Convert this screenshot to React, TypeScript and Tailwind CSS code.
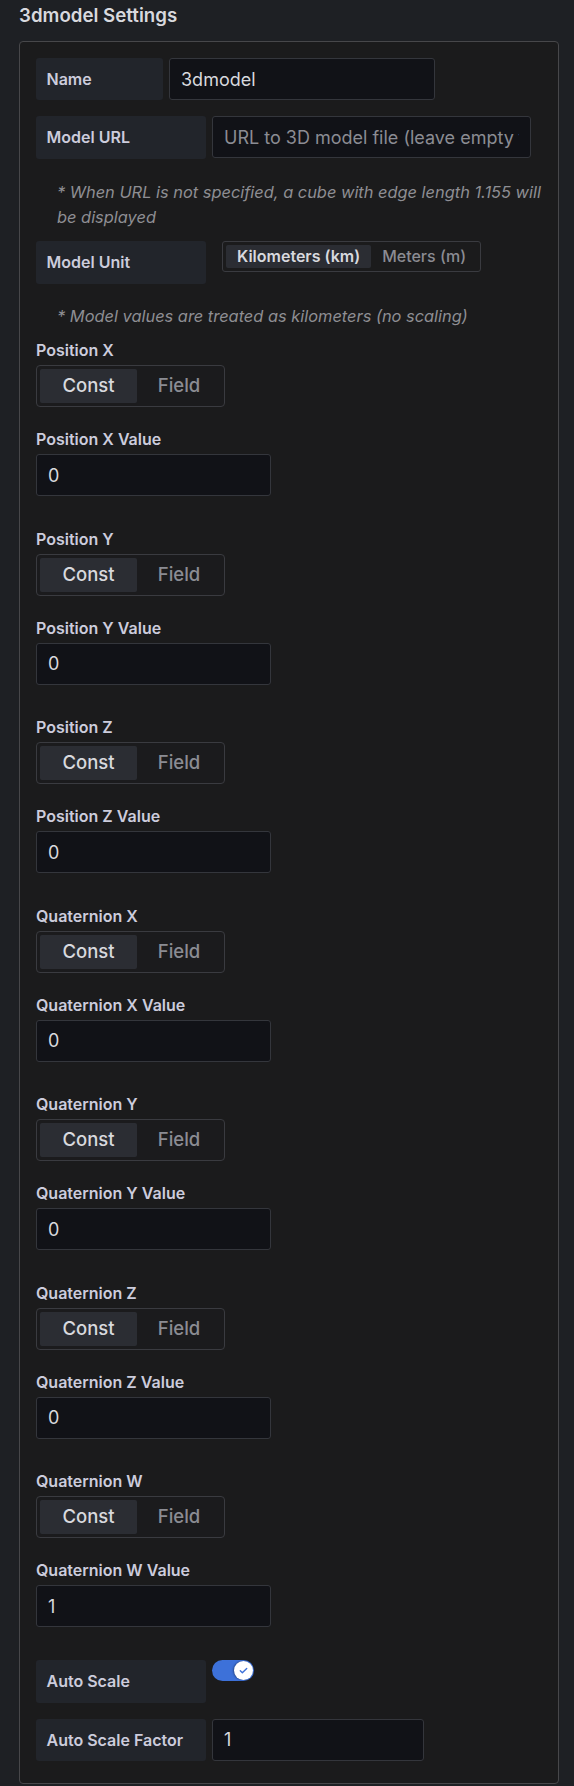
import React from 'react';

const groups = [
  { label: 'Position X', value: '0' },
  { label: 'Position Y', value: '0' },
  { label: 'Position Z', value: '0' },
  { label: 'Quaternion X', value: '0' },
  { label: 'Quaternion Y', value: '0' },
  { label: 'Quaternion Z', value: '0' },
  { label: 'Quaternion W', value: '1' },
];

function InlineLabel({ text, width, height = 'h-[42px]' }: { text: string; width: string; height?: string }) {
  return (
    <div
      className={`${width} ${height} shrink-0 flex items-center pl-[10.5px] bg-[#22252b] rounded-[3px] text-[16px] font-semibold text-[#ccccdc] whitespace-nowrap`}
    >
      {text}
    </div>
  );
}

function TextInput({ value, placeholder, width }: { value?: string; placeholder?: string; width: string }) {
  return (
    <div
      className={`${width} h-[42px] shrink-0 flex items-center pl-[11px] pr-[11px] bg-[#111217] border border-[#34363c] rounded-[3px] text-[18px]`}
    >
      <span className="block min-w-0 flex-1 overflow-hidden whitespace-nowrap">
        {value ? (
          <span className="text-[#d8d9de]">{value}</span>
        ) : (
          <span className="text-[#8b8c93]">{placeholder}</span>
        )}
      </span>
    </div>
  );
}

function ConstField() {
  return (
    <div className="w-[189px] h-[42px] flex p-[3px] border border-[#3a3b40] rounded-[4px] bg-[#1b1b1d]">
      <div className="w-[97px] flex items-center justify-center bg-[#2b2d33] rounded-[2px] text-[18.5px] font-medium text-[#d8d9de]">
        Const
      </div>
      <div className="w-[84px] flex items-center justify-center text-[18.5px] font-medium text-[#8b8c93]">Field</div>
    </div>
  );
}

function Toggle() {
  return (
    <div className="relative w-[42px] h-[21px] shrink-0 rounded-full bg-[#3d71d9]">
      <div className="absolute right-[1px] top-[1px] w-[19px] h-[19px] rounded-full bg-white shadow-[-1px_0_2px_rgba(0,0,0,0.35)] flex items-center justify-center">
        <svg width="11" height="11" viewBox="0 0 24 24" fill="none" stroke="#3d71d9" strokeWidth="3" strokeLinecap="round" strokeLinejoin="round">
          <path d="M5 12.5l4.5 4.5L19 7.5" />
        </svg>
      </div>
    </div>
  );
}

export default function App() {
  return (
    <div className="min-h-[1786px] w-full bg-[#1e2024] font-['Inter',sans-serif]">
      <div className="pl-[19px] pt-[4px] h-[41px] text-[18.7px] leading-[24px] font-semibold text-[#d8d9de]">
        3dmodel Settings
      </div>

      <div className="ml-[19px] w-[540px] bg-[#1b1b1c] border border-[#47474a] rounded-[4px] pl-[16px] pt-[16px] pb-[22px]">
        <div className="flex gap-[6px]">
          <InlineLabel text="Name" width="w-[127px]" />
          <TextInput value="3dmodel" width="w-[266px]" />
        </div>

        <div className="flex gap-[6px] mt-[16px]">
          <InlineLabel text="Model URL" width="w-[170px]" height="h-[42.5px]" />
          <TextInput placeholder="URL to 3D model file (leave empty to use default cube)" width="w-[319px]" />
        </div>

        <p className="mt-[21px] pl-[21px] pr-[6px] text-[16.4px] leading-[25px] italic text-[#8e8e93]">
          * When URL is not specified, a cube with edge length 1.155 will be displayed
        </p>

        <div className="flex mt-[11px]">
          <InlineLabel text="Model Unit" width="w-[170px]" height="h-[43px]" />
          <div className="ml-[16px] h-[31px] flex p-[3px] border border-[#3a3b40] rounded-[3px]">
            <div className="px-[11px] flex items-center bg-[#2b2d33] rounded-[2px] text-[16px] font-semibold text-[#d8d9de]">
              Kilometers (km)
            </div>
            <div className="px-[11px] flex items-center text-[16px] font-medium text-[#8b8c93]">Meters (m)</div>
          </div>
        </div>

        <p className="mt-[20.7px] pl-[21px] text-[16.4px] leading-[25px] italic text-[#8e8e93]">
          * Model values are treated as kilometers (no scaling)
        </p>

        <div className="mt-[11px]">
          {groups.map((g) => (
            <div key={g.label} className="pb-[32.5px]">
              <div className="h-[20px] leading-[20px] text-[16px] font-semibold text-[#ccccdc] mb-[5px]">{g.label}</div>
              <ConstField />
              <div className="mt-[22px] h-[20px] leading-[20px] text-[16px] font-semibold text-[#ccccdc] mb-[5px]">
                {g.label} Value
              </div>
              <TextInput value={g.value} width="w-[235px]" />
            </div>
          ))}
        </div>

        <div className="flex gap-[6px]">
          <InlineLabel text="Auto Scale" width="w-[170px]" height="h-[43px]" />
          <Toggle />
        </div>

        <div className="flex gap-[6px] mt-[16px]">
          <InlineLabel text="Auto Scale Factor" width="w-[170px]" />
          <TextInput value="1" width="w-[212px]" />
        </div>
      </div>
    </div>
  );
}
